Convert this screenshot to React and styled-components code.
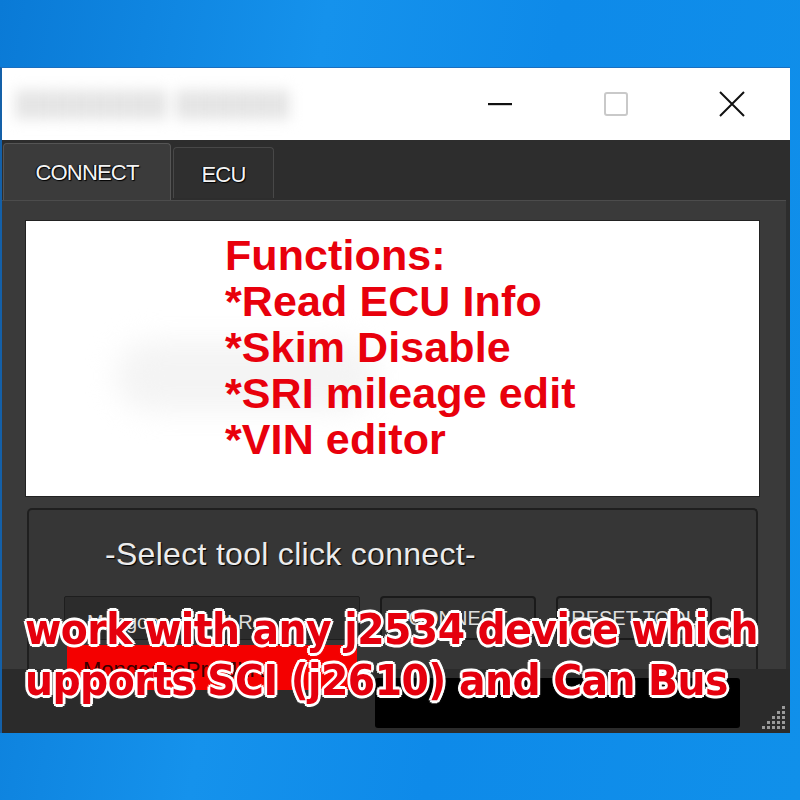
import React from "react";
import styled, { createGlobalStyle } from "styled-components";

const Global = createGlobalStyle`
  html, body { margin: 0; padding: 0; }
  body { width: 800px; height: 800px; overflow: hidden; font-family: "Liberation Sans", Arial, sans-serif; }
`;

const Desktop = styled.div`
  position: relative;
  width: 800px;
  height: 800px;
  padding-top: 67px;
  box-sizing: border-box;
  background: linear-gradient(100deg, #0a7ad6 0%, #1592ec 35%, #0e8ae9 60%, #1090ea 100%);
  overflow: hidden;
`;

const Window = styled.div`
  width: 790px;
  height: 666px;
  display: flex;
  flex-direction: column;
  border-top: 1px solid #1a6fc0;
  border-left: 2px solid #1460a8;
  box-sizing: border-box;
  background: #2d2d2d;
`;

const TitleBar = styled.div`
  height: 72px;
  background: #fff;
  display: flex;
  align-items: center;
  padding-left: 14px;
  flex-shrink: 0;
`;

const BlurTitle = styled.div`
  flex: 1;
  font-size: 24px;
  color: #e2e2e2;
  filter: blur(7px);
  letter-spacing: 2px;
`;

const CaptionBtn = styled.div`
  width: 116px;
  height: 72px;
  display: flex;
  align-items: center;
  justify-content: center;
`;

const Body = styled.div`
  flex: 1;
  display: flex;
  flex-direction: column;
  min-height: 0;
`;

const TabStrip = styled.div`
  height: 60px;
  display: flex;
  align-items: flex-end;
  gap: 2px;
  padding-left: 1px;
  flex-shrink: 0;
`;

const Tab = styled.div`
  height: ${(p) => (p.$active ? "57px" : "51px")};
  width: ${(p) => p.$w}px;
  box-sizing: border-box;
  background: ${(p) => (p.$active ? "#3b3b3b" : "#2f2f2f")};
  border: 1px solid ${(p) => (p.$active ? "#555" : "#484848")};
  border-bottom: none;
  border-radius: 4px 4px 0 0;
  display: flex;
  align-items: flex-start;
  justify-content: center;
  padding-top: ${(p) => (p.$active ? "16px" : "14px")};
  color: #f4f4f4;
  font-size: 22px;
  letter-spacing: -0.8px;
  text-shadow: 1px 1px 1px #000, -1px 0 1px #000;
  margin-bottom: ${(p) => (p.$active ? "0" : "2px")};
`;

const TabPanel = styled.div`
  flex: 1;
  margin: 0 4px 0 0;
  background: #3a3a3a;
  border-top: 1px solid #4c4c4c;
  padding: 19px 26px 0 23px;
  display: flex;
  flex-direction: column;
  min-height: 0;
  overflow: hidden;
`;

const InfoBox = styled.div`
  height: 277px;
  background: #fff;
  border: 1px solid #222;
  box-sizing: border-box;
  padding: 11px 0 0 199px;
  flex-shrink: 0;
  position: relative;
`;

const Smudge = styled.div`
  position: absolute;
  left: 90px;
  top: 120px;
  width: 260px;
  height: 70px;
  border-radius: 40px;
  background: #f4f4f4;
  filter: blur(14px);
`;

const FuncLine = styled.div`
  position: relative;
  font-family: "Liberation Sans", Arial, sans-serif;
  font-weight: 700;
  font-size: 43px;
  line-height: 46px;
  color: #e8000c;
  letter-spacing: 0.1px;
`;

const LowerPanel = styled.div`
  margin: 11px 2px 0 2px;
  flex: 1;
  background: #363636;
  border: 2px solid #1f1f1f;
  border-bottom: none;
  border-radius: 5px 5px 0 0;
  padding: 26px 0 0 76px;
`;

const Prompt = styled.div`
  font-family: "Liberation Sans", Arial, sans-serif;
  font-size: 32px;
  color: #ececec;
  letter-spacing: 0.3px;
  text-shadow: 1px 1px 1px #000;
`;

const ControlRow = styled.div`
  display: flex;
  gap: 20px;
  margin: 23px 0 0 -41px;
`;

const SelectBox = styled.div`
  width: 296px;
  height: 44px;
  box-sizing: border-box;
  background: #2c2c2c;
  border: 1px solid #1e1e1e;
  border-radius: 2px;
  color: #ddd;
  font-size: 20px;
  padding: 14px 0 0 22px;
`;

const Button = styled.div`
  width: 156px;
  height: 44px;
  box-sizing: border-box;
  background: #333;
  border: 2px solid #1a1a1a;
  border-radius: 4px;
  color: #ddd;
  font-size: 20px;
  display: flex;
  align-items: center;
  justify-content: center;
`;

const StatusBar = styled.div`
  height: 64px;
  background: #2b2b2b;
  flex-shrink: 0;
  display: flex;
  align-items: flex-start;
  padding: 9px 0 0 373px;
  box-sizing: border-box;
  position: relative;
`;

const BlackBox = styled.div`
  width: 365px;
  height: 50px;
  background: #000;
  border-radius: 3px;
`;

const Grip = styled.svg`
  position: absolute;
  right: 2px;
  bottom: 3px;
`;

const DropItem = styled.div`
  position: absolute;
  left: 67px;
  top: 645px;
  width: 290px;
  height: 45px;
  background: #f40000;
  color: #3a0000;
  font-size: 22px;
  padding: 12px 0 0 16px;
  box-sizing: border-box;
`;

const Overlay = styled.div`
  position: absolute;
  left: 25px;
  top: 604px;
  font-family: "DejaVu Sans", Verdana, sans-serif;
  font-weight: 700;
  font-size: 43px;
  line-height: 51px;
  letter-spacing: -0.6px;
  color: #e5000e;
  white-space: nowrap;
  transform: scaleX(0.915);
  transform-origin: 0 0;
  text-shadow:
    3px 0 0 #fff, -3px 0 0 #fff, 0 3px 0 #fff, 0 -3px 0 #fff,
    2px 2px 0 #fff, -2px -2px 0 #fff, 2px -2px 0 #fff, -2px 2px 0 #fff,
    0 0 4px #fff;
`;

const gripDots = [
  [20, 2], [20, 7], [20, 12], [20, 17], [20, 22],
  [15, 7], [15, 12], [15, 17], [15, 22],
  [10, 12], [10, 17], [10, 22],
  [5, 17], [5, 22],
  [0, 22],
];

export default function App() {
  return (
    <>
      <Global />
      <Desktop>
        <Window>
          <TitleBar>
            <BlurTitle>████████ ██████</BlurTitle>
            <CaptionBtn>
              <svg width="26" height="4" viewBox="0 0 26 4">
                <rect x="1" y="1" width="24" height="2.2" fill="#111" />
              </svg>
            </CaptionBtn>
            <CaptionBtn>
              <svg width="26" height="26" viewBox="0 0 26 26">
                <rect x="2" y="2" width="22" height="22" rx="2" fill="none" stroke="#c9c9c9" strokeWidth="2" />
              </svg>
            </CaptionBtn>
            <CaptionBtn>
              <svg width="28" height="28" viewBox="0 0 28 28">
                <path d="M2 2 L26 26 M26 2 L2 26" stroke="#111" strokeWidth="2" />
              </svg>
            </CaptionBtn>
          </TitleBar>
          <Body>
            <TabStrip>
              <Tab $active $w={168}>CONNECT</Tab>
              <Tab $w={101}>ECU</Tab>
            </TabStrip>
            <TabPanel>
              <InfoBox>
                <Smudge />
                <FuncLine>Functions:</FuncLine>
                <FuncLine>*Read ECU Info</FuncLine>
                <FuncLine>*Skim Disable</FuncLine>
                <FuncLine>*SRI mileage edit</FuncLine>
                <FuncLine>*VIN editor</FuncLine>
              </InfoBox>
              <LowerPanel>
                <Prompt>-Select tool click connect-</Prompt>
                <ControlRow>
                  <SelectBox>MongoosePro JLR</SelectBox>
                  <Button>CONNECT</Button>
                  <Button>RESET TOOL</Button>
                </ControlRow>
              </LowerPanel>
            </TabPanel>
            <StatusBar>
              <BlackBox />
              <Grip width="26" height="26" viewBox="0 0 26 26">
                {gripDots.map(([x, y], i) => (
                  <rect key={i} x={x} y={y} width="3" height="3" fill="#9a9a9a" />
                ))}
              </Grip>
            </StatusBar>
          </Body>
        </Window>
        <DropItem>MongoosePro JLR</DropItem>
        <Overlay>
          work with any j2534 device which
          <br />
          upports SCI (j2610) and Can Bus
        </Overlay>
      </Desktop>
    </>
  );
}
